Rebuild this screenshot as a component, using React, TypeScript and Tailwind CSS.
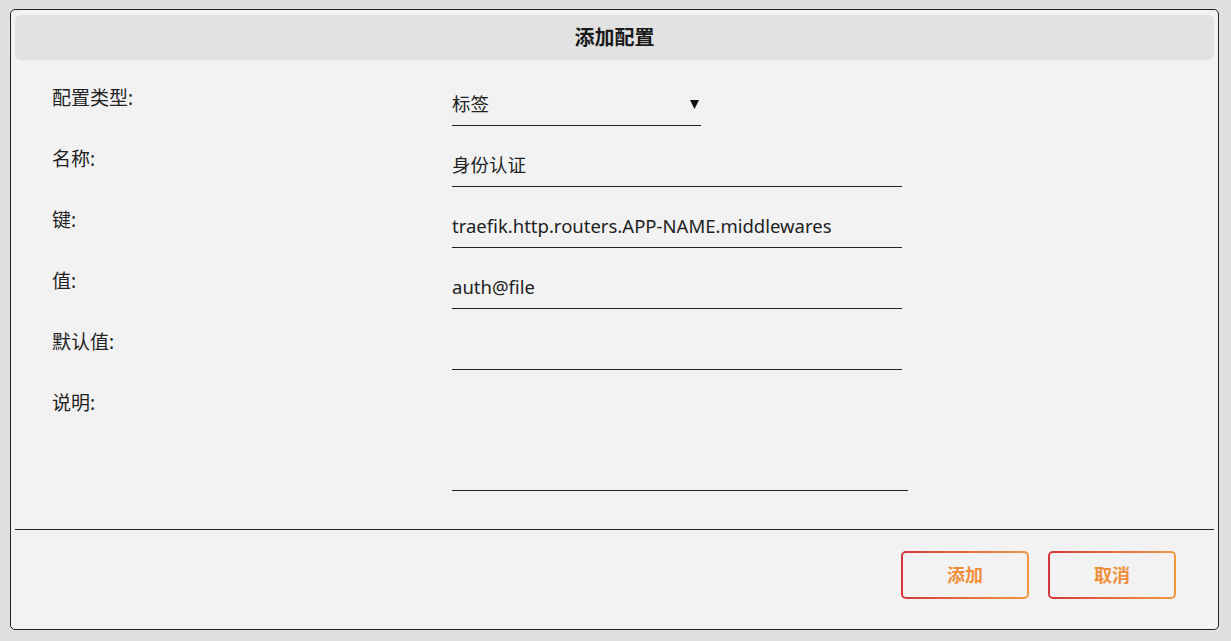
import React from "react";

const font = { fontFamily: '"Noto Sans", "Noto Sans CJK SC", sans-serif' };

function Field({ label, children }: { label: string; children: React.ReactNode }) {
  return (
    <div className="flex items-start h-[61px]">
      <div className="w-[437px] pl-[37px] text-[19px] leading-[24px] text-[#222]">{label}</div>
      {children}
    </div>
  );
}

function TextInput({ value, width = "w-[450px]" }: { value?: string; width?: string }) {
  return (
    <div className={`${width} h-[40px] border-b border-[#222] pt-[6px] text-[18.5px] leading-[24px] text-[#222]`}>
      {value}
    </div>
  );
}

function GradientButton({ children }: { children: React.ReactNode }) {
  return (
    <button className="w-[128px] h-[48px] rounded-[5px] p-[2px] bg-gradient-to-r from-[#d4333c] to-[#f0983f]">
      <span className="flex h-full w-full items-center justify-center rounded-[3px] bg-[#f2f2f2] text-[18px] font-bold text-[#ef8f3c]">
        {children}
      </span>
    </button>
  );
}

export default function App() {
  return (
    <div className="min-h-screen bg-[#e0e0e0] pt-[9px] pl-[10px]" style={font}>
      <div className="w-[1209px] h-[621px] rounded-[5px] border border-[#222] bg-[#f2f2f2] px-[4px] pt-[5px] flex flex-col">
        <div className="h-[45px] rounded-[6px] bg-[#e2e2e2] flex items-center justify-center text-[20px] font-bold text-[#1a1a1a]">
          添加配置
        </div>

        <div className="pt-[26px]">
          <Field label="配置类型:">
            <div className="w-[249px] h-[40px] border-b border-[#222] pt-[6px] flex items-start justify-between text-[18.5px] leading-[24px] text-[#222]">
              <span>标签</span>
              <svg width="9" height="9" viewBox="0 0 9 9" className="mt-[8px] mr-[2px]">
                <polygon points="0,0 9,0 4.5,9" fill="#111" />
              </svg>
            </div>
          </Field>
          <Field label="名称:">
            <TextInput value="身份认证" />
          </Field>
          <Field label="键:">
            <TextInput value="traefik.http.routers.APP-NAME.middlewares" />
          </Field>
          <Field label="值:">
            <TextInput value="auth@file" />
          </Field>
          <Field label="默认值:">
            <TextInput />
          </Field>
          <div className="flex items-start">
            <div className="w-[437px] pl-[37px] text-[19px] leading-[24px] text-[#222]">说明:</div>
            <div className="w-[456px] h-[100px] border-b border-[#222]" />
          </div>
        </div>

        <div className="flex-1" />
        <div className="border-t border-[#222]" />
        <div className="h-[99px] flex justify-end items-start pt-[21px] pr-[38px] gap-[19px]">
          <GradientButton>添加</GradientButton>
          <GradientButton>取消</GradientButton>
        </div>
      </div>
    </div>
  );
}
